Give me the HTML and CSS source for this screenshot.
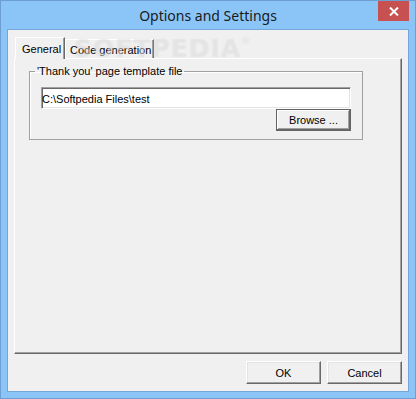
FILE: index.html
```html
<!DOCTYPE html>
<html lang="en">
<head>
    <meta charset="UTF-8">
    <meta name="viewport" content="width=device-width, initial-scale=1.0">
    <title>Options and Settings</title>
    <link rel="stylesheet" href="styles.css">
</head>
<body>
    <div class="window">
        <div class="titlebar">
            <span></span>
            <div class="title">Options and Settings</div>
            <button class="close" aria-label="Close">
                <svg width="10" height="9" viewBox="0 0 10 9">
                    <path d="M1 0.5 L9 8.5 M9 0.5 L1 8.5" stroke="#fff" stroke-width="2" fill="none"/>
                </svg>
            </button>
        </div>

        <div class="client">
            <div class="tabs">
                <div class="tab active">General</div>
                <div class="tab">Code generation</div>
            </div>

            <div class="panel">
                <fieldset class="group">
                    <legend>'Thank you' page template file</legend>
                    <input class="path" type="text" value="C:\Softpedia Files\test">
                    <div class="browse-row">
                        <button class="btn default">Browse ...</button>
                    </div>
                </fieldset>
            </div>

            <div class="footer">
                <button class="btn">OK</button>
                <button class="btn">Cancel</button>
            </div>

            <div class="watermark">SOFTPEDIA<sup>®</sup></div>
        </div>
    </div>
</body>
</html>
```

FILE: styles.css
```css
body {
    margin: 0;
    padding: 0;
    width: 416px;
    height: 399px;
    overflow: hidden;
    font-family: 'Liberation Sans', Arial, sans-serif;
    font-size: 11px;
    color: #000;
}

.window {
    box-sizing: border-box;
    width: 416px;
    height: 399px;
    display: flex;
    flex-direction: column;
    background-color: #8bc5f8;
    border: 1px solid #6d9fd2;
    padding: 0 6px 6px 6px;
}

.titlebar {
    height: 28px;
    display: grid;
    grid-template-columns: 1fr auto 1fr;
    align-items: center;
}

.title {
    font-family: 'Noto Sans', 'Open Sans', sans-serif;
    font-size: 14px;
    color: #1a1a1a;
    padding-top: 1px;
}

.close {
    justify-self: end;
    align-self: start;
    width: 31px;
    height: 20px;
    margin: 0;
    padding: 0;
    border: none;
    background-color: #c75050;
    display: flex;
    justify-content: center;
    align-items: center;
}

.client {
    position: relative;
    flex: 1;
    display: flex;
    flex-direction: column;
    background-color: #f0f0f0;
    border: 1px solid #74a6d8;
    padding: 7px 6px 7px 6px;
}

/* tab headers */
.tabs {
    height: 21px;
    display: flex;
    align-items: flex-end;
    padding-left: 1px;
}

.tab {
    box-sizing: border-box;
    height: 19px;
    padding: 4px 4px 0 4px;
    background-color: #f0f0f0;
    border-top: 1px solid #fff;
    border-left: 1px solid #fff;
    border-right: 1px solid #696969;
    box-shadow: inset -1px 0 #a0a0a0;
    white-space: nowrap;
}

.tab.active {
    position: relative;
    z-index: 1;
    height: 22px;
    width: 50px;
    margin-bottom: -1px;
    padding: 5px 0 0 6px;
}

.tab + .tab {
    width: 89px;
    padding-left: 4px;
}

/* page of the tab control */
.panel {
    flex: 1;
    box-sizing: border-box;
    border: 1px solid;
    border-color: #fff #696969 #696969 #fff;
    box-shadow: inset -1px -1px #a0a0a0;
    padding: 6px 38px 0 14px;
}

.group {
    margin: 0;
    padding: 9px 11px 8px 11px;
    border: 1px solid #a0a0a0;
    box-shadow: 1px 1px 0 #fff inset;
}

.group legend {
    margin-left: -6px;
    padding: 0 2px;
    line-height: 13px;
}

.path {
    display: block;
    box-sizing: border-box;
    width: 100%;
    height: 22px;
    margin: 0;
    padding: 1px 0 0 0;
    font-family: 'Liberation Sans', Arial, sans-serif;
    font-size: 11px;
    color: #000;
    background-color: #fff;
    border: 1px solid;
    border-color: #a0a0a0 #fff #fff #a0a0a0;
    box-shadow: inset 1px 1px #696969, inset -1px -1px #e3e3e3;
    outline: none;
}

.browse-row {
    display: flex;
    justify-content: flex-end;
}

.btn {
    box-sizing: border-box;
    width: 75px;
    height: 23px;
    margin: 0;
    padding: 0;
    font-family: 'Liberation Sans', Arial, sans-serif;
    font-size: 11px;
    color: #000;
    background-color: #f0f0f0;
    border: 1px solid;
    border-color: #fff #696969 #696969 #fff;
    box-shadow: inset -1px -1px #a0a0a0, inset 1px 1px #e3e3e3;
}

.btn.default {
    height: 22px;
    border-color: #646464;
    box-shadow: inset -1px -1px #696969, inset 1px 1px #fff, inset -2px -2px #a0a0a0;
}

.footer {
    display: flex;
    justify-content: flex-end;
    gap: 6px;
    margin-top: 7px;
}

/* faint site watermark over the tab strip */
.watermark {
    position: absolute;
    left: 66px;
    top: 4px;
    font-family: 'DejaVu Sans', sans-serif;
    font-weight: bold;
    font-size: 25px;
    letter-spacing: 1px;
    color: rgba(255, 255, 255, 0.3);
    text-shadow: 0 0 1px rgba(170, 170, 170, 0.3);
    pointer-events: none;
}

.watermark sup {
    font-size: 9px;
    vertical-align: 13px;
}
```
